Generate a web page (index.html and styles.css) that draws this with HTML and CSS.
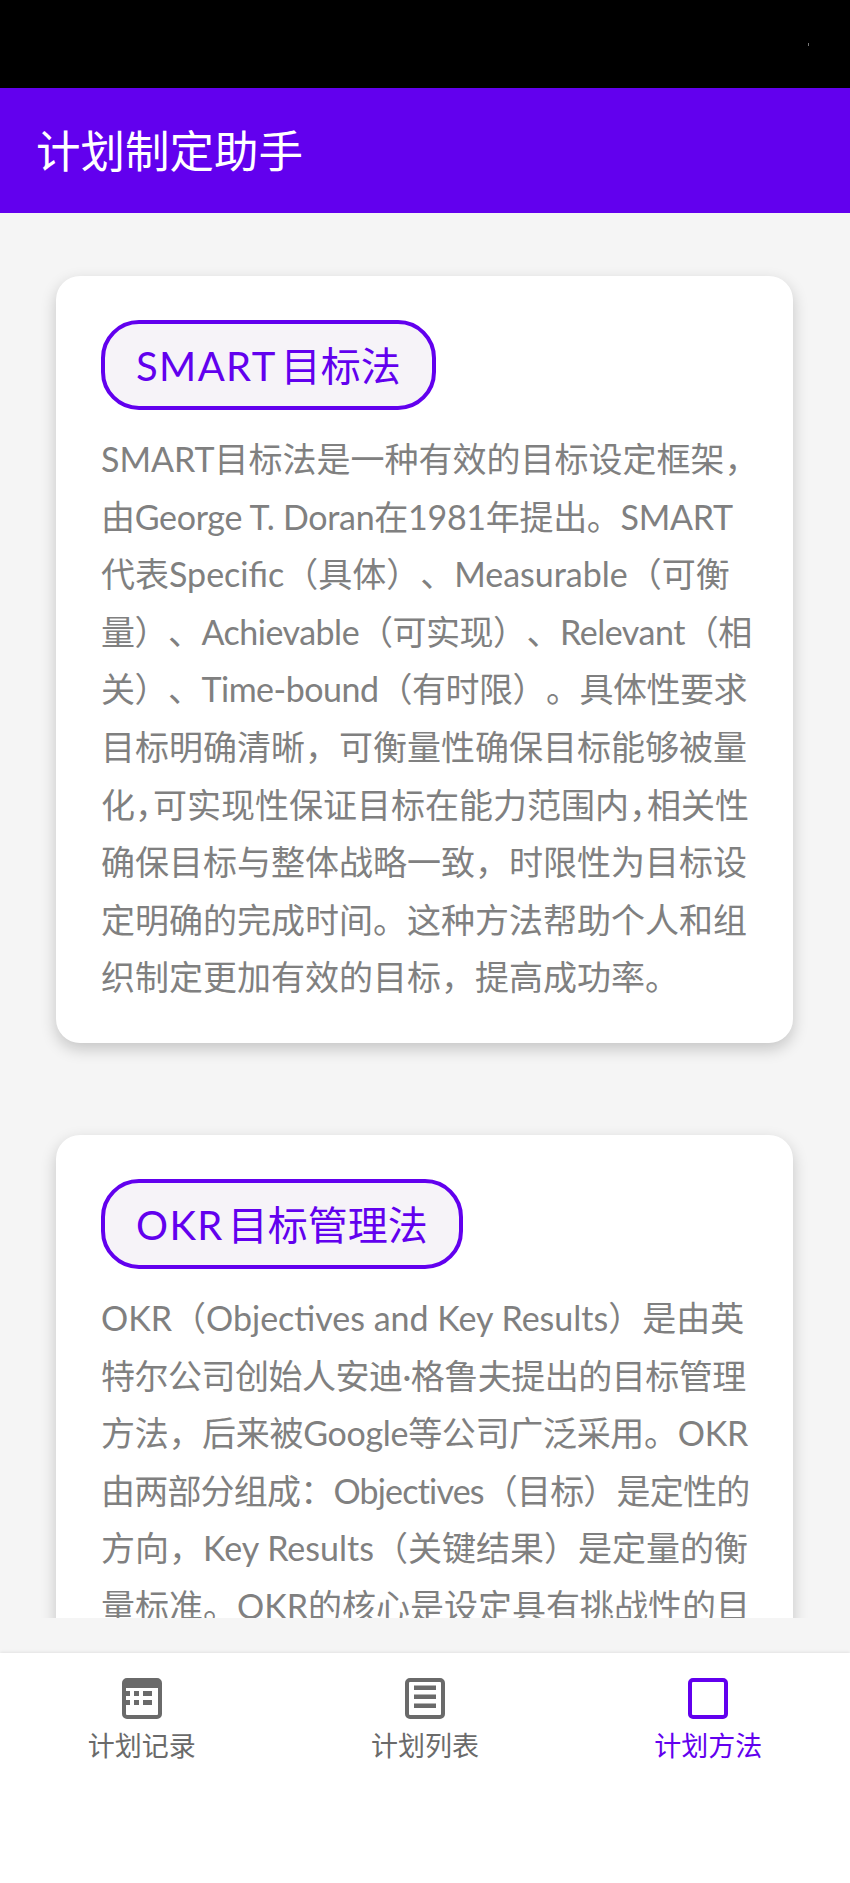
FILE: index.html
```html
<!DOCTYPE html>
<html lang="zh-CN">

<head>
    <meta charset="UTF-8">
    <meta name="viewport" content="width=device-width, initial-scale=1.0">
    <title>计划制定助手</title>
    <link rel="stylesheet" href="styles.css">
</head>

<body>
    <div class="app">
        <div class="status-bar"><span class="status-dot"></span></div>
        <header class="app-bar">计划制定助手</header>

        <main class="content">
            <section class="card">
                <h2 class="chip"><span class="chip-latin">SMART</span>目标法</h2>
                <p class="card-text">
                    <span class="line">SMART目标法是一种有效的目标设定框架，</span>
                    <span class="line squeeze-sm">由George T. Doran在1981年提出。SMART</span>
                    <span class="line">代表Specific（具体）、Measurable（可衡</span>
                    <span class="line squeeze-md">量）、Achievable（可实现）、Relevant（相</span>
                    <span class="line squeeze-md">关）、Time-bound（有时限）。具体性要求</span>
                    <span class="line">目标明确清晰，可衡量性确保目标能够被量</span>
                    <span class="line">化<span class="tight">，</span>可实现性保证目标在能力范围内<span class="tight">，</span>相关性</span>
                    <span class="line">确保目标与整体战略一致，时限性为目标设</span>
                    <span class="line">定明确的完成时间。这种方法帮助个人和组</span>
                    <span class="line">织制定更加有效的目标，提高成功率。</span>
                </p>
            </section>
            <section class="card">
                <h2 class="chip"><span class="chip-latin">OKR</span>目标管理法</h2>
                <p class="card-text">
                    <span class="line">OKR（Objectives and Key Results）是由英</span>
                    <span class="line squeeze-md">特尔公司创始人安迪·格鲁夫提出的目标管理</span>
                    <span class="line squeeze-sm">方法，后来被Google等公司广泛采用。OKR</span>
                    <span class="line squeeze-lg">由两部分组成：Objectives（目标）是定性的</span>
                    <span class="line">方向，Key Results（关键结果）是定量的衡</span>
                    <span class="line">量标准。OKR的核心是设定具有挑战性的目</span>
                </p>
            </section>
        </main>

        <nav class="bottom-nav">
            <div class="nav-item">
                <svg class="nav-icon" viewBox="0 0 40 41">
                    <rect x="2" y="2" width="36" height="37" rx="3" fill="none" stroke="currentColor" stroke-width="4"/>
                    <rect x="2" y="2" width="36" height="8" fill="currentColor"/>
                    <path d="M2 13h6v5H2zM12 13h5v5h-5zM21 13h9v5h-9zM2 22h6v5H2zM12 22h5v5h-5zM21 22h9v5h-9z" fill="currentColor"/>
                </svg>
                <span class="nav-label">计划记录</span>
            </div>
            <div class="nav-item">
                <svg class="nav-icon" viewBox="0 0 40 41">
                    <rect x="2" y="2" width="36" height="37" rx="3" fill="none" stroke="currentColor" stroke-width="4"/>
                    <path d="M9 7.5h22V12H9zM9 16.5h22V21H9zM9 25.5h22V30H9z" fill="currentColor"/>
                </svg>
                <span class="nav-label">计划列表</span>
            </div>
            <div class="nav-item active">
                <svg class="nav-icon" viewBox="0 0 40 41">
                    <rect x="2" y="2" width="36" height="37" rx="3" fill="none" stroke="currentColor" stroke-width="4"/>
                </svg>
                <span class="nav-label">计划方法</span>
            </div>
        </nav>
    </div>
</body>

</html>
```

FILE: styles.css
```css
html, body {
    margin: 0;
    padding: 0;
}

body {
    font-family: Lato, "Noto Sans CJK SC", sans-serif;
    text-spacing-trim: space-all;
    background-color: #fff;
}

.app {
    width: 850px;
    height: 1883px;
    display: flex;
    flex-direction: column;
    overflow: hidden;
    background-color: #f5f5f5;
}

.status-bar {
    height: 88px;
    flex: none;
    background-color: #000;
    display: flex;
    justify-content: flex-end;
    align-items: center;
    padding-right: 41px;
    box-sizing: border-box;
}

.status-dot {
    width: 1px;
    height: 3px;
    background-color: #777;
}

.app-bar {
    height: 125px;
    flex: none;
    background-color: #6200ee;
    color: #fff;
    font-size: 44.5px;
    line-height: 125px;
    padding-left: 36px;
    box-sizing: border-box;
}

.content {
    height: 1405px;
    flex: none;
    overflow: hidden;
    padding: 63px 57px 0 56px;
    box-sizing: border-box;
}

.card {
    background-color: #fff;
    border-radius: 24px;
    padding: 44px 45px 37px;
    margin-bottom: 92px;
    box-shadow: 0 6px 16px rgba(0, 0, 0, 0.2);
}

.chip {
    display: inline-block;
    margin: 0 0 20px;
    padding: 0 31px;
    height: 90px;
    line-height: 84px;
    border: 4px solid #6200ee;
    border-radius: 38px;
    box-sizing: border-box;
    background-color: #f6f3f8;
    color: #6200ee;
    font-size: 40px;
    font-weight: 400;
    vertical-align: top;
}

.chip-latin {
    letter-spacing: 1.4px;
    margin-right: 4px;
}

.card-text {
    margin: 0;
    color: #808080;
    font-size: 34px;
    line-height: 57.6px;
    white-space: nowrap;
}

.line {
    display: block;
}

/* lines the reference sets a little tighter */
.squeeze-sm {
    letter-spacing: -0.3px;
}

.squeeze-md {
    letter-spacing: -0.5px;
}

.squeeze-lg {
    letter-spacing: -0.8px;
}

.tight {
    letter-spacing: -16px;
}

.bottom-nav {
    margin-top: 35px;
    flex: 1;
    display: flex;
    background-color: #fff;
    box-shadow: 0 -1px 3px rgba(0, 0, 0, 0.08);
}

.nav-item {
    flex: 1;
    display: flex;
    flex-direction: column;
    align-items: center;
    padding-top: 25px;
    color: #6a6a6a;
}

.nav-item.active {
    color: #6200ee;
}

.nav-icon {
    width: 40px;
    height: 41px;
}

.nav-label {
    margin-top: 7px;
    font-size: 27px;
    line-height: 40px;
}
```
